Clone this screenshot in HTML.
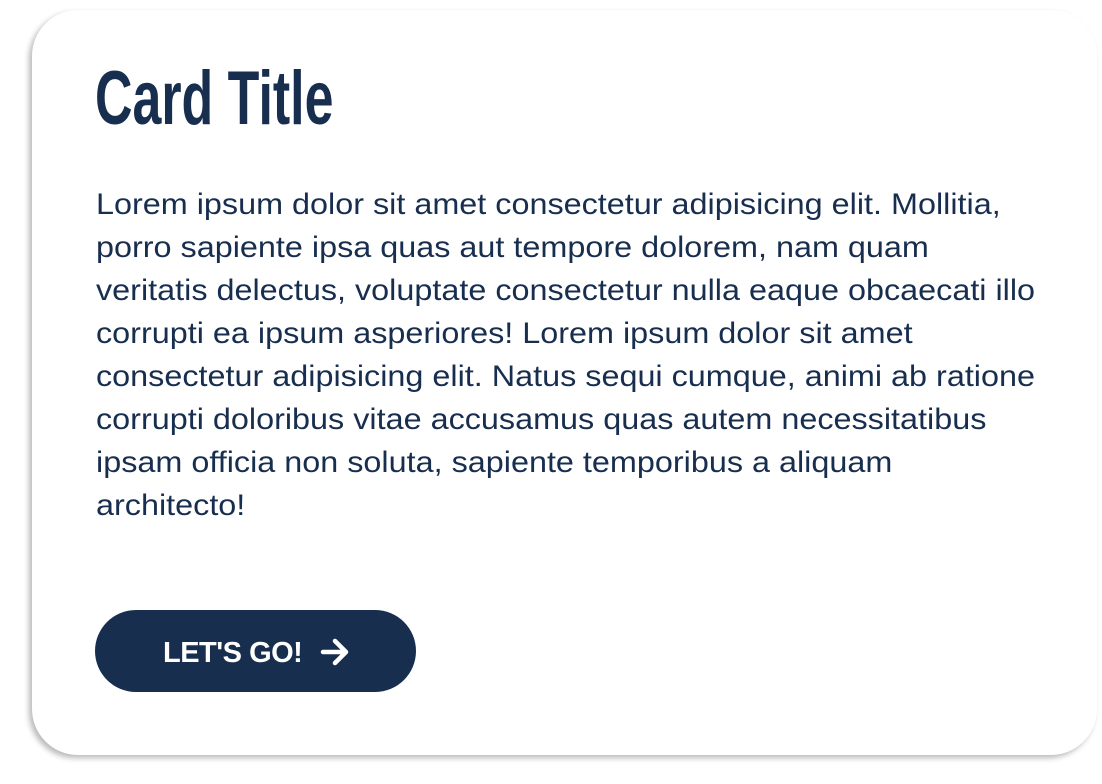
<!DOCTYPE html>
<html><head><style>
html,body{margin:0;padding:0;background:#fff;width:1102px;height:784px;overflow:hidden}
.card{position:absolute;left:32px;top:10px;width:1065px;height:745px;background:#fff;border-radius:46px;box-shadow:-3px 3px 6px rgba(0,0,0,0.28)}
.t{position:absolute;left:95px;top:56px;font-family:"Liberation Sans",sans-serif;font-weight:bold;font-size:76px;line-height:86px;color:#182e4f;transform:scaleX(0.683);transform-origin:0 0;white-space:nowrap}
.p{position:absolute;left:96px;top:183px;font-family:"Liberation Sans",sans-serif;font-size:29.5px;line-height:43px;color:#182e4f;transform:scaleX(1.097);transform-origin:0 0}
.p div{white-space:nowrap}
.b{position:absolute;left:95px;top:610px;width:321px;height:82px;border-radius:41px;background:#182e4f}
.bt{position:absolute;left:163px;top:635px;font-family:"Liberation Sans",sans-serif;font-weight:bold;font-size:29px;line-height:36px;color:#fff;white-space:nowrap;letter-spacing:-0.5px}
</style></head><body>
<div class="card"></div>
<div class="t">Card Title</div>
<div class="p">
<div>Lorem ipsum dolor sit amet consectetur adipisicing elit. Mollitia,</div>
<div>porro sapiente ipsa quas aut tempore dolorem, nam quam</div>
<div>veritatis delectus, voluptate consectetur nulla eaque obcaecati illo</div>
<div>corrupti ea ipsum asperiores! Lorem ipsum dolor sit amet</div>
<div>consectetur adipisicing elit. Natus sequi cumque, animi ab ratione</div>
<div>corrupti doloribus vitae accusamus quas autem necessitatibus</div>
<div>ipsam officia non soluta, sapiente temporibus a aliquam</div>
<div>architecto!</div>
</div>
<div class="b"></div>
<div class="bt">LET'S GO!</div>
<svg style="position:absolute;left:320px;top:638px" width="30" height="28" viewBox="0 0 30 28"><path d="M3 14H26M15 3L26 14L15 25" stroke="#fff" stroke-width="4.5" fill="none" stroke-linecap="round" stroke-linejoin="round"/></svg>
</body></html>
